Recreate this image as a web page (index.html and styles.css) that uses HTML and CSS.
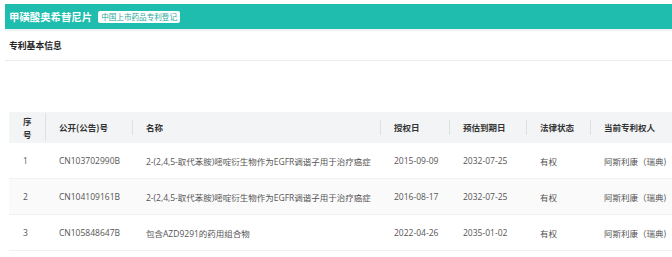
FILE: index.html
```html
<!DOCTYPE html>
<html lang="zh">
<head>
<meta charset="utf-8">
<link rel="stylesheet" href="styles.css">
</head>
<body>
<div class="page">
  <div class="topbar">
    <span class="title">甲磺酸奥希替尼片</span>
    <span class="badge">中国上市药品专利登记</span>
  </div>
  <div class="section-title">专利基本信息</div>
  <table class="patents">
    <colgroup>
      <col class="c1"><col class="c2"><col class="c3"><col class="c4"><col class="c5"><col class="c6"><col class="c7">
    </colgroup>
    <thead>
      <tr>
        <th class="first">序号</th>
        <th class="tall">公开(公告)号</th>
        <th>名称</th>
        <th>授权日</th>
        <th>预估到期日</th>
        <th>法律状态</th>
        <th>当前专利权人</th>
      </tr>
    </thead>
    <tbody>
      <tr>
        <td>1</td><td>CN103702990B</td><td>2-(2,4,5-取代苯胺)嘧啶衍生物作为EGFR调谐子用于治疗癌症</td><td>2015-09-09</td><td>2032-07-25</td><td>有权</td><td>阿斯利康（瑞典)</td>
      </tr>
      <tr class="alt">
        <td>2</td><td>CN104109161B</td><td>2-(2,4,5-取代苯胺)嘧啶衍生物作为EGFR调谐子用于治疗癌症</td><td>2016-08-17</td><td>2032-07-25</td><td>有权</td><td>阿斯利康（瑞典)</td>
      </tr>
      <tr>
        <td>3</td><td>CN105848647B</td><td>包含AZD9291的药用组合物</td><td>2022-04-26</td><td>2035-01-02</td><td>有权</td><td>阿斯利康（瑞典)</td>
      </tr>
    </tbody>
  </table>
</div>
</body>
</html>
```

FILE: styles.css
```css
html, body {
  margin: 0;
  padding: 0;
  background: #ffffff;
}
body {
  font-family: "Open Sans", "Noto Sans CJK SC", sans-serif;
  overflow: hidden;
}
.page {
  padding: 4px 0 0 5px;
}
.topbar {
  height: 25px;
  background: #1fbdae;
  display: flex;
  align-items: center;
  gap: 6px;
  padding-left: 4px;
  box-shadow: 0 2px 1px #f1f3f3;
}
.title {
  color: #ffffff;
  font-family: "Noto Sans CJK SC", sans-serif;
  font-weight: 700;
  font-size: 10.4px;
}
.badge {
  background: #ffffff;
  color: #1fa89b;
  font-family: "Noto Sans CJK SC", sans-serif;
  font-size: 7.6px;
  line-height: 12px;
  height: 12px;
  padding: 0 3px;
  border-radius: 2px;
}
.section-title {
  margin-top: 2px;
  height: 29px;
  line-height: 30px;
  padding-left: 4px;
  font-family: "Noto Sans CJK SC", sans-serif;
  font-weight: 700;
  font-size: 8.8px;
  color: #222;
  border-bottom: 1px solid #ececec;
}
.patents {
  margin: 51px 0 0 4px;
  width: 663px;
  table-layout: fixed;
  border-collapse: collapse;
  font-size: 8.5px;
}
.c1 { width: 36px; }
.c2 { width: 87px; }
.c3 { width: 248px; }
.c4 { width: 69px; }
.c5 { width: 77px; }
.c6 { width: 64px; }
.c7 { width: 82px; }
.patents th {
  position: relative;
  background: #f2f4f5;
  color: #333;
  font-weight: 700;
  font-family: "Noto Sans CJK SC", sans-serif;
  text-align: left;
  height: 30px;
  padding: 0 0 0 14px;
  line-height: 13px;
  white-space: nowrap;
}
.patents th.first {
  white-space: normal;
  padding-right: 8px;
  padding-top: 1px;
}
.patents th + th::before {
  content: "";
  position: absolute;
  left: 0;
  top: 8px;
  height: 15px;
  width: 1px;
  background: #dde1e3;
}
.patents th.tall::before {
  top: 1px;
  height: 28px;
}
.patents td {
  height: 35px;
  padding: 0 0 0 14px;
  color: #555;
  white-space: nowrap;
  overflow: hidden;
  border-bottom: 1px solid #f1f1f1;
}
.patents tr.alt td {
  background: #fafafa;
}
```
